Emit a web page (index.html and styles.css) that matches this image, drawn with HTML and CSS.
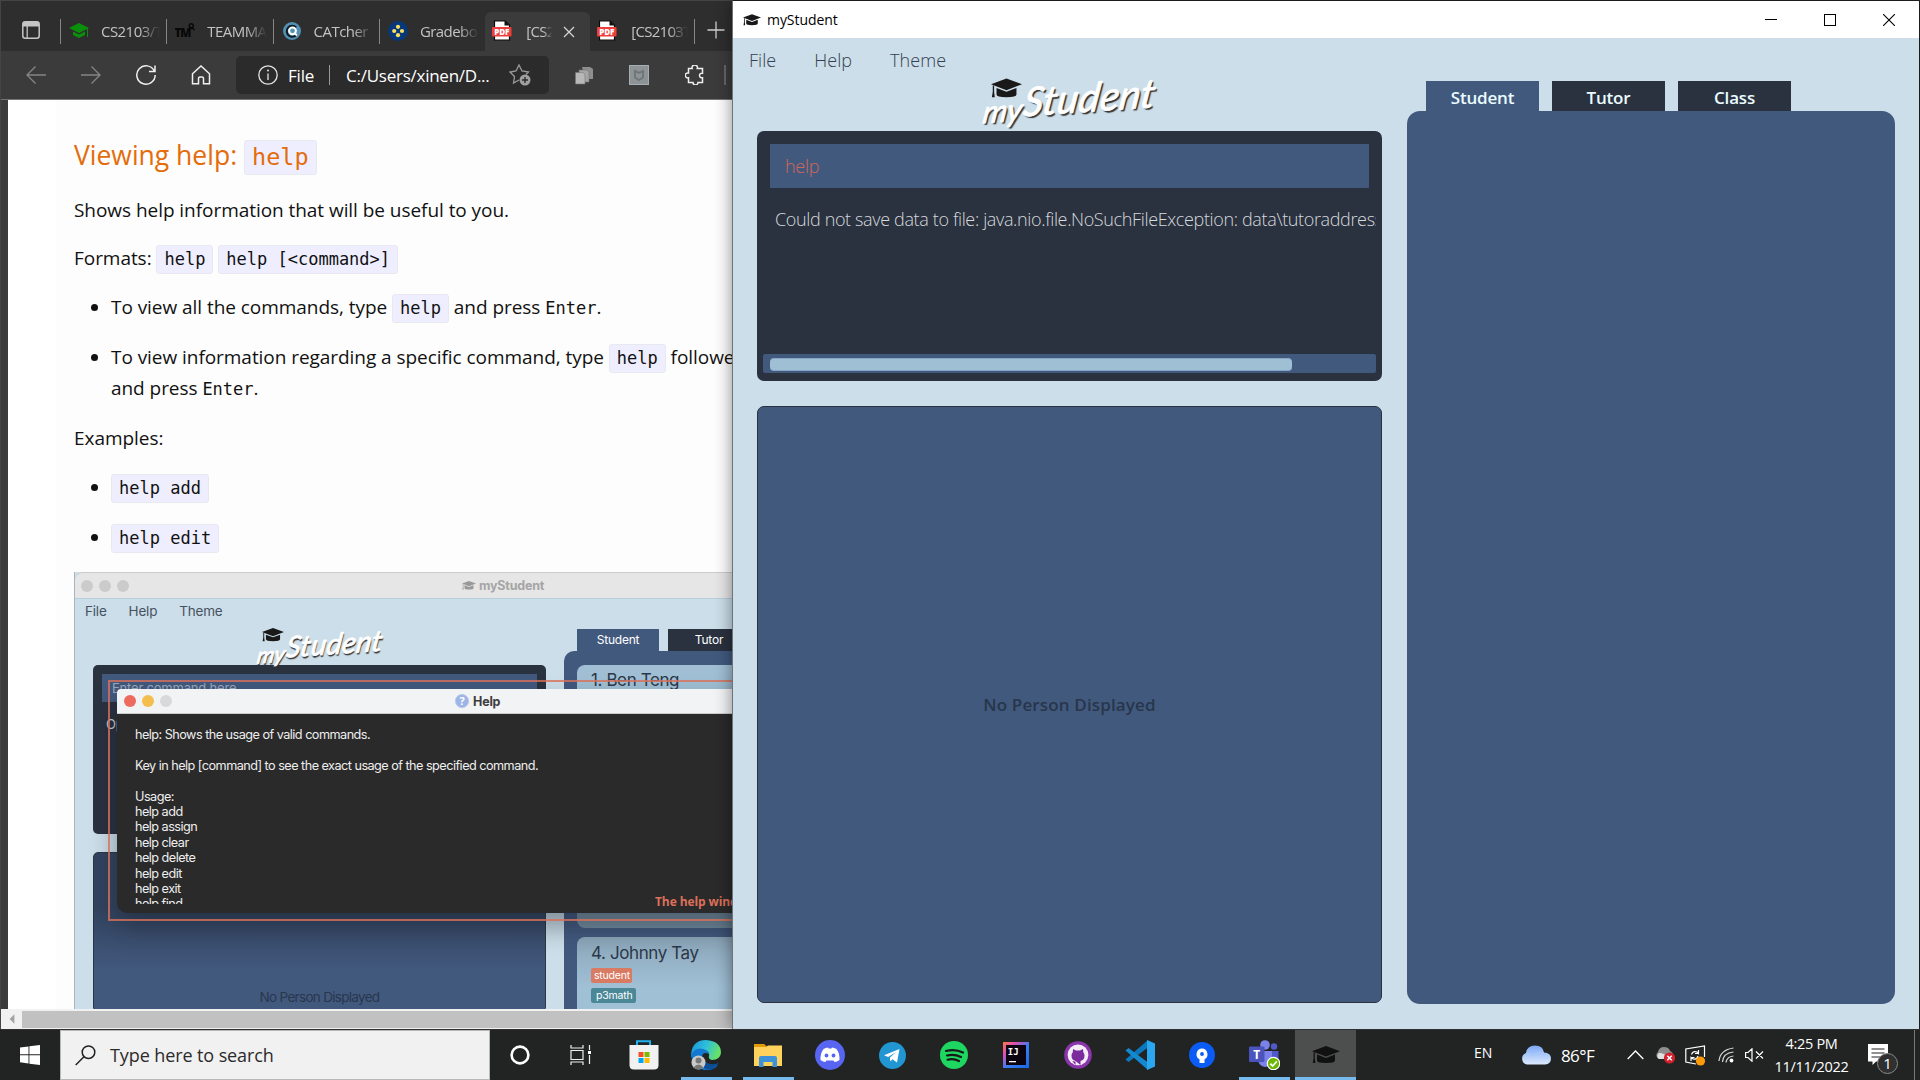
FILE: index.html
```html
<!DOCTYPE html>
<html lang="en">
<head>
<meta charset="utf-8">
<title>Desktop</title>
<link rel="stylesheet" href="styles.css">
</head>
<body>
<svg class="defs" width="0" height="0" aria-hidden="true">
  <symbol id="cap" viewBox="0 0 28 18">
    <path d="M14 0 28 5.2 14 10.6 0 5.2Z"/>
    <path d="M5 8.6 14 12 23 8.6V14.5Q23 17 14 17T5 14.5Z"/>
    <path d="M1.6 6.2h1.2V12L3.4 17H.8L1.6 12Z"/>
  </symbol>
  <symbol id="pdf" viewBox="0 0 20 21">
    <path d="M2.5.8H13L17.5 5V20.2H2.5Z" fill="#fff" stroke="#0b0b0b" stroke-width="1.2"/>
    <path d="M12.5.8 17.5 5.4H12.5Z" fill="#111"/>
    <rect x="0" y="7" width="19.5" height="9.5" rx="1" fill="#ee3f3f"/>
    <text x="9.8" y="14.6" text-anchor="middle" font-size="8" font-weight="800" font-family="Open Sans, sans-serif" fill="#fff">PDF</text>
  </symbol>
</svg>
<div class="desktop">
  <section class="browser">
    <div class="tabs">
      <div class="side-btn"><svg width="18" height="18" viewBox="0 0 18 18"><rect x=".8" y=".8" width="16.4" height="16.4" rx="2.5" fill="none" stroke="#c6c6c6" stroke-width="1.5"/><path d="M1 1h16v4.5H1z" fill="#c6c6c6"/><path d="M5.2 5v12" stroke="#c6c6c6" stroke-width="1.3"/></svg></div>
      <div class="tab"><svg width="20" height="16" viewBox="0 0 20 16" fill="#0a8f0a"><path d="M10 0 20 5 10 10 0 5Z"/><path d="M4 8.4 10 11.4 16 8.4V12L10 15 4 12Z"/><path d="M18 5.5h1V14h-1z"/></svg><span>CS2103/T</span></div>
      <div class="tab"><svg width="20" height="18" viewBox="0 0 20 18"><text x="-.5" y="15" font-size="11.5" font-weight="800" letter-spacing="-1" font-family="Open Sans, sans-serif" fill="#080808">TM</text><circle cx="16.3" cy="3.8" r="2" fill="none" stroke="#080808" stroke-width="1.5"/><path d="M13 8q3.5-3.500 6.500 0" stroke="#080808" stroke-width="1.500" fill="none"/></svg><span>TEAMMATES</span></div>
      <div class="tab"><svg width="18" height="18" viewBox="0 0 18 18"><circle cx="9" cy="9" r="9" fill="#5290b4"/><path d="M13.200 5.400A5.500 5.500 0 1 0 14 12" fill="none" stroke="#101820" stroke-width="2"/><circle cx="9.500" cy="8.800" r="3.400" fill="#5290b4" stroke="#fff" stroke-width="2"/><path d="m11.500 11 2.500 2.500" stroke="#fff" stroke-width="2"/></svg><span>CATcher 3</span></div>
      <div class="tab"><svg width="20" height="20" viewBox="0 0 20 20"><circle cx="10" cy="10" r="9.900" fill="#06387c"/><g fill="#fbe05f"><circle cx="10" cy="5.800" r="2.100"/><circle cx="6.200" cy="10" r="2.100"/><circle cx="14" cy="10" r="2.100"/><circle cx="10" cy="14.200" r="2.100"/></g></svg><span>Gradebook</span></div>
      <div class="tab active"><svg width="20" height="21"><use href="#pdf"/></svg><span>[CS2103</span><svg class="x" width="12" height="12" viewBox="0 0 12 12"><path d="m1 1 10 10M11 1 1 11" stroke="#d4d4d4" stroke-width="1.300"/></svg></div>
      <div class="tab last"><svg width="20" height="21"><use href="#pdf"/></svg><span>[CS2103T</span></div>
      <div class="plus"><svg width="18" height="18" viewBox="0 0 18 18"><path d="M9 .5v17M.5 9h17" stroke="#cfcfcf" stroke-width="1.300"/></svg></div>
    </div>
    <div class="toolbar">
      <svg class="nav" width="20" height="20" viewBox="0 0 20 20"><path d="M20 10H1M9.500 1.500 1 10l8.500 8.500" stroke="#858585"/></svg>
      <svg class="nav" width="20" height="20" viewBox="0 0 20 20"><path d="M0 10h19M10.500 1.500 19 10l-8.500 8.500" stroke="#858585"/></svg>
      <svg class="nav" width="20" height="20" viewBox="0 0 20 20"><path d="M18.300 6A9.200 9.200 0 1 0 19.200 10M19 .5V6.500H13" stroke="#efefef" stroke-width="1.500"/></svg>
      <svg class="nav" width="20" height="20" viewBox="0 0 20 20"><path d="M1.500 8.800 10 1l8.500 7.800V18.800H12.500V13.500q0-1.500-1.500-1.500H9Q7.500 12 7.500 13.500V18.800H1.500Z" stroke="#efefef" stroke-width="1.500"/></svg>
      <div class="address">
        <svg width="20" height="20" viewBox="0 0 20 20"><circle cx="10" cy="10" r="9.200" fill="none" stroke="#e4e4e4" stroke-width="1.300"/><path d="M10 8.500V15" stroke="#e4e4e4" stroke-width="1.300"/><circle cx="10" cy="5.600" r="1" fill="#e4e4e4"/></svg>
        <span class="scheme">File</span><i></i><span class="path">C:/Users/xinen/D...</span>
        <svg class="star" width="23" height="22" viewBox="0 0 23 22"><path d="M10 16 4.500 19 5.500 12.500 1 8l6-1L10 1l3 6 6.500 1-2.500 2.500" fill="none" stroke="#9a9a9a" stroke-width="1.300"/><circle cx="16" cy="16" r="5.500" fill="#9f9f9f"/><path d="M16 13v6M13 16h6" stroke="#2b2b2b" stroke-width="1.400"/></svg>
      </div>
      <svg class="ext e1" width="19" height="19" viewBox="0 0 19 19"><path d="M7 1h8l3 2v10H10z" fill="#8e8e8e"/><path d="M4 4h8l2 2v10H5z" fill="#a6a6a6" stroke="#777" stroke-width=".6"/><path d="M.5 6.500H8L10 9v9H.5z" fill="#b8b8b8" stroke="#777" stroke-width=".6"/></svg>
      <svg class="ext e2" width="20" height="20" viewBox="0 0 20 20"><rect x=".5" y=".5" width="19" height="19" fill="#8e9396" stroke="#a4adb3"/><path d="M6 6 10 8l4-2v6.500L10 15l-4-2.500Z" fill="none" stroke="#70777b" stroke-width="2"/></svg>
      <svg class="ext e3" width="20" height="20" viewBox="0 0 20 20"><path d="M3.500 3.500H7.200A2.700 2.700 0 1 1 12.300 3.500H17.500V8.300A2.300 2.300 0 1 0 17.500 12.700V17.500H13A2.400 2.400 0 1 1 8 17.500H3.500V12.800A2.500 2.500 0 1 1 3.500 8Z" fill="none" stroke="#eee" stroke-width="1.500"/></svg>
      <b></b>
    </div>
    <div class="viewport">
      <article>
        <h2>Viewing help: <code>help</code></h2>
        <p class="shows">Shows help information that will be useful to you.</p>
        <p>Formats: <code>help</code> <code>help [&lt;command&gt;]</code></p>
        <ul>
          <li>To view all the commands, type <code>help</code> and press <kbd>Enter</kbd>.</li>
          <li>To view information regarding a specific command, type <code>help</code> followed<br>and press <kbd>Enter</kbd>.</li>
        </ul>
        <p>Examples:</p>
        <ul>
          <li><code>help add</code></li>
          <li><code>help edit</code></li>
        </ul>
        <figure class="shot">
          <header><i></i><i></i><i></i><span class="shot-title"><svg width="14" height="11"><use href="#cap"/></svg>myStudent</span></header>
          <nav><span>File</span><span>Help</span><span>Theme</span></nav>
          <div class="shot-body">
            <div class="shot-left">
              <div class="logo small"><svg width="22" height="18"><use href="#cap"/></svg><span><small>my</small>Student</span></div>
              <div class="shot-cmd"><div>Enter command here...</div><p>Op</p></div>
              <div class="shot-none">No Person Displayed</div>
            </div>
            <div class="shot-right">
              <div class="shot-tabs"><span>Student</span><span>Tutor</span></div>
              <div class="shot-list">
                <div class="card one"><h4>1. Ben Teng</h4></div>
                <div class="card"><h4>4. Johnny Tay</h4><span class="tag">student</span><span class="tag teal">p3math</span></div>
              </div>
            </div>
          </div>
          <div class="help-win">
            <header><i></i><i></i><i></i><span><svg width="14" height="14" viewBox="0 0 14 14"><circle cx="7" cy="7" r="6.600" fill="#9db5e6" stroke="#b9c9ec"/><text x="7" y="11" font-size="11" font-weight="700" fill="#fff" text-anchor="middle" font-family="Open Sans, sans-serif">?</text></svg>Help</span></header>
            <pre>help: Shows the usage of valid commands.

Key in help [command] to see the exact usage of the specified command.

Usage:
help add
help assign
help clear
help delete
help edit
help exit
help find</pre>
            <em>The help window</em>
          </div>
          <div class="red-frame"></div>
        </figure>
      </article>
    </div>
    <div class="hscroll"><svg width="22" height="20" viewBox="0 0 22 20"><path d="M14 5v10l-5-5z" fill="#a3a3a3"/></svg><i></i></div>
  </section>

  <section class="app">
    <header class="titlebar">
      <svg width="18" height="12"><use href="#cap"/></svg><span>myStudent</span>
      <div class="controls"><svg width="12" height="12"><path d="M0 5.500h12" stroke="#000"/></svg><svg width="12" height="12"><rect x=".5" y=".5" width="11" height="11" fill="none" stroke="#000"/></svg><svg width="12" height="12"><path d="m0 0 12 12M12 0 0 12" stroke="#000" stroke-width="1.100"/></svg></div>
    </header>
    <nav class="menu"><span>File</span><span>Help</span><span>Theme</span></nav>
    <div class="content">
      <div class="left">
        <div class="logo"><svg width="31" height="25"><use href="#cap"/></svg><span><small>my</small>Student</span></div>
        <div class="command"><div class="input">help</div><p>Could not save data to file: java.nio.file.NoSuchFileException: data\tutoraddressbook.json</p><div class="track"><i></i></div></div>
        <div class="person">No Person Displayed</div>
      </div>
      <div class="right">
        <div class="apptabs"><span class="on">Student</span><span>Tutor</span><span>Class</span></div>
        <div class="panel"></div>
      </div>
    </div>
  </section>

  <footer class="taskbar">
    <div class="start"><svg width="20" height="20" viewBox="0 0 20 20" fill="#fff"><path d="M0 2.600 8.500 1.400V9.300H0ZM9.400 1.200 20 0V9.300H9.400ZM0 10.200H8.500V18.500L0 17.300ZM9.400 10.200H20V20L9.400 18.700Z"/></svg></div>
    <div class="search"><svg width="21" height="21" viewBox="0 0 21 21"><circle cx="13.500" cy="7.200" r="6.300" fill="none" stroke="#222" stroke-width="1.500"/><path d="M9 11.800.7 20" stroke="#222" stroke-width="1.500"/></svg><span>Type here to search</span></div>
    <div class="icons">
      <div class="first"><svg width="20" height="20" viewBox="0 0 20 20"><circle cx="10" cy="10" r="8.400" fill="none" stroke="#fff" stroke-width="2.600"/></svg></div>
      <div class="view"><svg width="21" height="20" viewBox="0 0 21 20" fill="none" stroke="#eee" stroke-width="1.200"><path d="M1 0v3h12V0M1 20v-3h12v3M1 5.500h12v9H1ZM19.500 0v5M19.500 10v9"/><path d="M18 6h3v3h-3z" fill="#fff" stroke="none"/></svg></div>
      <div><svg width="30" height="30" viewBox="0 0 30 30"><path d="M8 6V1.200H21V6" fill="none" stroke="#20b0ee" stroke-width="2"/><path d="M.5 5h29v20q0 4.500-4.500 4.500H5Q.5 29.500.5 25Z" fill="#f1f1f1"/><path d="M9.500 12h5v5h-5z" fill="#f25022"/><path d="M15.500 12h5v5h-5z" fill="#7fba00"/><path d="M9.500 18h5v5h-5z" fill="#00a4ef"/><path d="M15.500 18h5v5h-5z" fill="#ffb900"/></svg></div>
      <div class="open"><svg width="30" height="30" viewBox="0 0 30 30"><defs><linearGradient id="eg" x2="1" y2=".3"><stop stop-color="#1993d8"/><stop offset=".55" stop-color="#2ec0dc"/><stop offset="1" stop-color="#66e06a"/></linearGradient></defs><path d="M0 17Q0 0 15 0 30 1 30 13 29 20 21 20 17 19 18 16 19 12 14 10 6 8 0 17Z" fill="url(#eg)"/><path d="M0 15Q4 7 12 9 18 11 18 14 11 11 11 18 13 27 22 27L27 25Q22 31 13 30 1 27 0 15Z" fill="#1278d0"/><path d="M12 16Q12 23 20 24 25 25 28 22 23 32 14 29 9 23 12 16Z" fill="#0c4f99"/><circle cx="7.500" cy="22.500" r="7" fill="#c9c9c9"/><circle cx="7.500" cy="20.500" r="3" fill="#777"/><path d="M2.500 27.500q5-6 10 0-5 4-10 0Z" fill="#777"/></svg></div>
      <div class="open"><svg width="28" height="24" viewBox="0 0 28 24"><path d="M0 1h10l3 2.500V8H0Z" fill="#e29a06"/><path d="M0 4h12l2-1.500H28V23H0Z" fill="#ffd25d"/><path d="M5 24V15q0-2 2-2H21q2 0 2 2v9h-4.500V19H9.500v5Z" fill="#3c91d8"/></svg></div>
      <div><svg width="30" height="30" viewBox="0 0 30 30"><circle cx="15" cy="15" r="15" fill="#5865f2"/><path d="M8.500 9Q11 7.500 13 7.500L13.500 8.500H16.500L17 7.500Q19 7.500 21.500 9 25 14 24.500 20 22 22 19.500 22L18.500 20.500H11.500L10.500 22Q8 22 5.500 20 5 14 8.500 9Z" fill="#fff"/><ellipse cx="11.500" cy="15.500" rx="1.900" ry="2.100" fill="#5865f2"/><ellipse cx="18.500" cy="15.500" rx="1.900" ry="2.100" fill="#5865f2"/></svg></div>
      <div><svg width="27" height="27" viewBox="0 0 27 27"><circle cx="13.500" cy="13.500" r="13.500" fill="#2196d3"/><path d="M5 13.300 20.500 7 18 20.500 13.500 17.300 11.500 19.500 10.800 15.700 17 10 9.200 15Z" fill="#fff"/></svg></div>
      <div><svg width="28" height="28" viewBox="0 0 28 28"><circle cx="14" cy="14" r="14" fill="#1ed760"/><path d="M6 10q9-2.500 17 1.500M7 14.500q7-2 14 1.500M7.500 18.700q6-1.700 11.500 1.300" fill="none" stroke="#181818" stroke-width="2.200" stroke-linecap="round"/></svg></div>
      <div><svg width="26" height="26" viewBox="0 0 26 26"><defs><linearGradient id="ig" x2="1" y2="1"><stop stop-color="#ff7a40"/><stop offset=".25" stop-color="#e14fb2"/><stop offset=".55" stop-color="#3a7cf5"/><stop offset="1" stop-color="#1667e8"/></linearGradient></defs><path d="M0 0h26v26H0z" fill="url(#ig)"/><path d="M3 3h20v20H3z" fill="#0b0310"/><text x="4.800" y="13" font-family="DejaVu Sans Mono, monospace" font-weight="700" font-size="9" fill="#fff">IJ</text><path d="M6 19h7v1.300H6z" fill="#fff"/></svg></div>
      <div><svg width="28" height="28" viewBox="0 0 28 28"><circle cx="14" cy="14" r="13.800" fill="#8b35ac"/><circle cx="14" cy="13.800" r="10.400" fill="#f4edf8"/><path d="M11.500 24V20.500Q8 21 7 18.500M11.500 20Q7.500 19 7.500 14.500 7.500 12.500 8.800 11.200L9 8 12 9.500h4L19 8 19.300 11.200Q20.500 12.500 20.500 14.500 20.500 19 16.500 20V24Z" fill="#7b2b9c"/></svg></div>
      <div><svg width="30" height="30" viewBox="0 0 30 30"><path d="m.5 19.500 3 2.500L23 7.500V0Z" fill="#0b78be"/><path d="M.5 10.500 3.500 8 23 22.500V30Z" fill="#1489d0"/><path d="M22 0 30 3.500V26.500L22 30Z" fill="#2aa7ef"/></svg></div>
      <div><svg width="26" height="26" viewBox="0 0 26 26"><circle cx="13" cy="13" r="13" fill="#0a5cf5"/><path d="M13 6.500A5.700 5.700 0 0 0 10.500 17.200V21H15.500V17.200A5.700 5.700 0 0 0 13 6.500Z" fill="#fff"/><circle cx="13" cy="12" r="1.900" fill="#0a5cf5"/></svg></div>
      <div class="open"><svg width="31" height="30" viewBox="0 0 31 30"><circle cx="16" cy="5" r="4.800" fill="#7b83eb"/><circle cx="25" cy="6.500" r="3.200" fill="#5059c9"/><path d="M19 11H29.500V20Q29 24 24 24H19Z" fill="#5059c9"/><path d="M9 11H23V20Q22 27 16 27 10 26 9 20Z" fill="#7b83eb"/><rect y="6.500" width="15.500" height="15.500" rx="1" fill="#4b53bc"/><text x="7.700" y="18.500" text-anchor="middle" font-size="12" font-weight="700" fill="#fff" font-family="Open Sans, sans-serif">T</text><circle cx="24.500" cy="23.500" r="6.200" fill="#6bb700" stroke="#fff" stroke-width="1.200"/><path d="m21.300 23.600 2.300 2.400 4.200-4.600" fill="none" stroke="#fff" stroke-width="1.800"/></svg></div>
      <div class="open current"><svg width="28" height="18" fill="#111"><use href="#cap"/></svg></div>
    </div>
    <div class="tray">
      <span class="lang">EN</span>
      <svg class="cloud" width="30" height="20" viewBox="0 0 30 20"><defs><linearGradient id="cg" y2="1" x2="0"><stop stop-color="#7ca9f4"/><stop offset="1" stop-color="#dce9fd"/></linearGradient></defs><path d="M6 19.500A6 6 0 0 1 5 8Q6 .5 14 .5T23 7.500Q30 8 30 13.500T24 19.500Z" fill="url(#cg)"/><path d="M5 8q4 0 6 3 5-5 12-3.500" fill="none" stroke="#a9c8fa"/></svg>
      <span class="temp">86°F</span>
      <svg class="chev" width="17" height="10" viewBox="0 0 17 10"><path d="m.7 9 7.800-8 7.800 8" fill="none" stroke="#fff" stroke-width="1.300"/></svg>
      <svg class="od" width="21" height="18" viewBox="0 0 21 18"><path d="M4 13A4 4 0 0 1 3 6Q4 1 9 1t6 4q4 1 3 8Z" fill="#8e8e8e"/><path d="M4 13A3.500 3.500 0 0 1 4 7q5-1 10 6Z" fill="#e0e0e0"/><circle cx="14.500" cy="12" r="5.600" fill="#d3222e"/><path d="m12.300 9.800 4.400 4.400m0-4.400-4.400 4.400" stroke="#fff" stroke-width="1.500"/></svg>
      <svg class="upd" width="21" height="21" viewBox="0 0 21 21" fill="none" stroke="#fff" stroke-width="1.200"><path d="M11 19 .8 17V4L19.500 1V12M6.500 9.500Q8 5.500 12 7l1.500 1.500V5M13.500 8.500H10M13 11Q12 15 8 14L6 12.500V16M6 12.500h3.500"/><circle cx="15.500" cy="16" r="4.600" fill="#ff9a0a" stroke="none"/></svg>
      <svg class="wifi" width="17" height="16" viewBox="0 0 17 16" fill="none" stroke="#d8d8d8" stroke-width="1.200"><path d="M1 14Q2 3 15.500 1M4.500 15Q5 6 15.500 5M8 15.500Q9 9.500 15.500 9"/><circle cx="13.500" cy="13.500" r="1.900" fill="#fff" stroke="none"/></svg>
      <svg class="vol" width="19" height="14" viewBox="0 0 19 14" fill="none" stroke="#fff" stroke-width="1.200"><path d="M.6 4.500H3L7 .8V13.200L3 9.500H.6ZM11 3.500l7 7m0-7-7 7"/></svg>
      <div class="clock"><span>4:25 PM</span><span>11/11/2022</span></div>
      <svg class="note" width="31" height="31" viewBox="0 0 31 31"><path d="M0 0h20v17.500H8L4.500 21v-3.500H0Z" fill="#fff"/><path d="M3.500 5H16.500M3.500 9H16.500M3.500 13H12" stroke="#222" stroke-width="1.200"/><circle cx="19.500" cy="19.500" r="10" fill="#303030" stroke="#888"/><text x="19.500" y="25" text-anchor="middle" font-size="15" font-family="Open Sans, sans-serif" fill="#fff">1</text></svg>
    </div>
  </footer>
</div>
</body>
</html>
```
FILE: styles.css
```css
* { box-sizing: border-box; }
body { margin: 0; font-family: "Open Sans", "Noto Sans", sans-serif; overflow: hidden; }
svg { display: block; flex: none; }
.defs { position: absolute; }
p, h2, h4, ul, figure, pre { margin: 0; padding: 0; }
.desktop { position: relative; width: 1920px; height: 1080px; overflow: hidden; background: #232323; }

/* browser window */
.browser { position: absolute; left: 0; top: 0; width: 733px; height: 1029px; display: flex; flex-direction: column; background: #3b3b3b; border-left: 1px solid #444; }
.tabs { height: 51px; display: flex; align-items: flex-end; background: #2e2e2e; border-top: 1px solid #444; color: #c3c3c3; font-size: 15px; }
.side-btn { width: 59px; height: 39px; padding: 9px 0 0 21px; }
.tab { position: relative; width: 106.300px; flex: none; height: 39px; display: flex; align-items: center; padding: 0 5px 2px 9px; overflow: hidden; }
.tab::before { content: ""; position: absolute; left: 0; top: 7px; width: 1px; height: 25px; background: #858585; }
.tab > svg { width: 20px; }
.tab span { margin-left: 12px; flex: 1; overflow: hidden; white-space: nowrap; letter-spacing: -.55px; mask-image: linear-gradient(90deg, #000 65%, transparent 98%); }
.tab.active { width: 105px; padding-left: 7px; background: #3b3b3b; border-radius: 6px 6px 0 0; }
.tab.active::before, .tab.last::before { display: none; }
.tab.last { width: 104px; padding-left: 7px; }
.tab.active span, .tab.last span { margin-left: 14px; letter-spacing: -.7px; }
.tab .x { width: 12px; margin: 2px 10px 0 10px; }
.plus { height: 39px; padding: 9px 0 0 13px; position: relative; }
.plus::before { content: ""; position: absolute; left: 0; top: 7px; width: 1px; height: 25px; background: #858585; }
.toolbar { height: 49px; display: flex; align-items: center; border-bottom: 1px solid #747474; padding-left: 25px; }
.nav { margin-right: 35px; fill: none; stroke-width: 1.300; }
.address { width: 313px; height: 38px; margin-left: -10px; display: flex; align-items: center; padding-left: 22px; background: #2b2b2b; border-radius: 5px; color: #fff; font-size: 17px; }
.scheme { width: 40px; margin-left: 10px; letter-spacing: -.2px; margin-right: 1px; }
.address i { width: 1px; height: 20px; background: #999; }
.path { width: 145px; margin-left: 16px; letter-spacing: -.25px; white-space: nowrap; }
.star { margin-left: 18px; }
.e1 { margin-left: 26px; }
.e2 { margin-left: 35px; }
.e3 { margin-left: 36px; }
.toolbar b { width: 2px; height: 20px; margin-left: 19px; background: #666; }
.viewport { height: 909px; margin-left: 7px; padding-left: 48px; background: #fff; overflow: hidden; }
article { height: 909px; padding: 35px 0 0 18px; background: #fdfdfd; color: #111; font-size: 19px; line-height: 31px; letter-spacing: -.05px; white-space: nowrap; }
h2 { height: 40px; margin-bottom: 20px; line-height: 40px; font-weight: 400; font-size: 26.500px; letter-spacing: 0; color: #e46c0a; }
article p { height: 31px; margin-bottom: 18px; }
article .shows { margin-bottom: 17px; }
article ul { padding-left: 37px; }
article li { margin-bottom: 19px; }
code { display: inline-block; padding: 3px 7px 4px; border: 1px solid #e8e8f0; border-radius: 3px; background: #eef; font: 17px/20px "DejaVu Sans Mono", monospace; letter-spacing: 0; vertical-align: baseline; margin: -8px 0; }
h2 code { font-size: 23.500px; line-height: 26px; }
kbd { font: 17px/1 "DejaVu Sans Mono", monospace; letter-spacing: 0; }
.hscroll { height: 20px; display: flex; background: #f1f1f1; }
.hscroll i { flex: 1; margin: 2px 0 1px; background: #c1c1c1; }
.hscroll svg { width: 21px; }

/* documentation picture of the application */
.shot { position: relative; width: 1000px; height: 440px; display: flex; flex-direction: column; background: #ccdee9; border-left: 1px solid #aab4bd; letter-spacing: -.2px; }
.shot > header { flex: none; height: 27px; display: flex; align-items: center; padding-left: 6px; background: #e6e6e6; border-top: 1px solid #ccc; border-bottom: 1px solid #b8cfdd; border-radius: 8px 0 0 0; }
.shot header i { width: 12px; height: 12px; margin-right: 6px; border-radius: 50%; background: #cbcbcb; }
.shot-title { display: flex; align-items: center; gap: 3px; margin-left: 327px; font: 700 12.500px Inter, sans-serif; color: #a5a5a5; fill: #999; }
.shot nav { flex: none; height: 27px; display: flex; gap: 22px; padding-left: 10px; font: 13.500px/25px Inter, sans-serif; color: #46525f; }
.shot-body { display: flex; flex: none; height: 386px; }
.shot-left { width: 453px; margin-left: 18px; display: flex; flex-direction: column; }
.shot-cmd { flex: none; height: 169px; padding: 9px; border-radius: 5px; background: #2a313f; color: #ccc; font: 13px Inter, sans-serif; }
.shot-cmd div { height: 28px; padding: 6px 10px; background: #42597e; color: #9ba8bb; }
.shot-cmd p { margin: 14px 0 0 4px; }
.shot-none { margin-top: 18px; flex: 1; border: 1px solid #2a3545; border-radius: 5px; background: linear-gradient(#32435f 35%, #42597e 75%); padding-top: 136px; text-align: center; color: #28374d; font: 13.500px Inter, sans-serif; letter-spacing: -.7px; }
.shot-right { margin-left: 18px; width: 480px; display: flex; flex-direction: column; }
.shot-tabs { flex: none; height: 25px; padding: 3px 0 0 13px; display: flex; gap: 9px; }
.shot-tabs span { width: 82px; height: 22px; background: #42597e; color: #fff; text-align: center; font: 12px/22px Inter, sans-serif; }
.shot-tabs span + span { background: #2a313f; }
.shot-list { flex: 1; padding: 14px 0 0 13px; border-radius: 10px 0 0 0; background: #42597e; }
.card { height: 110px; padding: 11px 14px; border-radius: 8px; background: linear-gradient(#8ba5b8, #a0c0d6 45%); }
.card.one { height: 263px; margin-bottom: 9px; padding-top: 2px; background: linear-gradient(#a0bfd4 40%, #718c9e); }
.card h4 { font: 17px/26px Inter, sans-serif; height: 26px; color: #2b3848; letter-spacing: -.4px; }
.card:not(.one) h4 { margin: -9px 0 1px; height: 28px; line-height: 28px; }
.tag { display: block; width: 41px; height: 15px; margin-bottom: 5px; border-radius: 2px; background: #d97a63; color: #fff; font: 10.500px/15px Inter, sans-serif; padding-left: 3px; }
.tag.teal { width: 45px; background: #4a8797; padding-left: 5px; }
.red-frame { position: absolute; left: 33px; top: 108px; width: 900px; height: 241px; border: 2px solid rgba(217, 112, 90, .8); }
.help-win { position: absolute; left: 42px; top: 117px; width: 900px; height: 224px; display: flex; flex-direction: column; background: #2a2a2a; border-radius: 4px 0 0 10px; color: #eee; box-shadow: 0 14px 26px rgba(20, 25, 35, .4); }
.help-win header { flex: none; height: 25px; display: flex; align-items: center; padding-left: 7px; background: #f2f3f5; border-radius: 4px 0 0 0; border-bottom: 1px solid #ccc; }
.help-win header i:nth-child(1) { background: #ec6a5e; }
.help-win header i:nth-child(2) { background: #f4be4f; }
.help-win header i:nth-child(3) { background: #d8d9da; }
.help-win header span { display: flex; align-items: center; gap: 4px; margin-left: 277px; color: #3d3d3d; font: 700 12.500px Inter, sans-serif; }
.help-win pre { height: 177px; margin: 13px 0 -12px 18px; overflow: hidden; font: 12.700px/15.400px Inter, sans-serif; letter-spacing: -.54px; }
.help-win em { margin-left: 538px; color: #dd705a; font: 700 12px/20px "Open Sans", sans-serif; letter-spacing: -.1px; }

/* myStudent window */
.app { position: absolute; left: 732px; top: 1px; width: 1187px; height: 1028px; display: flex; flex-direction: column; background: #ccdee9; border-left: 1px solid #6d7378; box-shadow: 0 0 16px rgba(0, 0, 0, .45); }
.titlebar { height: 37px; display: flex; align-items: center; padding: 0 24px 0 10px; background: #fff; color: #000; font-size: 14px; fill: #191919; }
.titlebar span { margin: -1px 0 0 6px; letter-spacing: -.05px; }
.controls { display: flex; gap: 47px; margin-left: auto; fill: none; }
.menu { height: 43px; display: flex; gap: 38px; padding-left: 16px; line-height: 44px; font-size: 18px; font-weight: 300; color: #34404f; letter-spacing: .05px; }
.content { height: 948px; display: flex; }
.left { width: 625px; margin-left: 24px; display: flex; flex-direction: column; }
.logo { position: relative; height: 50px; fill: #191919; color: #fff; }
.logo svg { position: absolute; left: 234px; top: -5px; }
.logo span { position: absolute; left: 227px; top: -7px; font: italic 400 40px/48px "Lato", sans-serif; letter-spacing: .3px; -webkit-text-stroke: .8px #fff; text-shadow: 2px 2px 1px #333; transform: rotate(-4deg) skewX(-12deg); white-space: nowrap; }
.logo small { font-size: 31px; position: relative; top: 4px; }
.logo.small { height: 39px; flex: none; }
.logo.small svg { left: 169px; top: 0; }
.logo.small span { left: 165px; top: 1px; font-size: 29px; line-height: 34px; text-shadow: 1px 2px 1px #333; }
.logo.small small { font-size: 22px; }
.command { height: 250px; display: flex; flex-direction: column; padding: 13px 6px 8px; border-radius: 7px; background: #2a313f; }
.input { height: 44px; margin: 0 7px; padding-left: 15px; line-height: 45px; background: #42597e; color: #d0665a; font-size: 18px; font-weight: 300; letter-spacing: -.3px; }
.command p { margin: 14px 0 0 12px; overflow: hidden; white-space: nowrap; line-height: 34px; color: #d6d9dd; font-size: 18px; font-weight: 300; letter-spacing: -.36px; }
.track { height: 19px; margin-top: auto; padding: 4px 7px 2px; background: #42597e; border-radius: 2px; }
.track i { display: block; width: 522px; height: 13px; border-radius: 4px; background: #9fbfd5; border: 1px solid #86a6c3; border-width: 1px 0; }
.person { height: 597px; margin-top: 25px; border: 1px solid #2a313f; border-radius: 7px; background: #42597e; color: #27364b; font-weight: 600; font-size: 17px; line-height: 595px; text-align: center; letter-spacing: .15px; }
.right { width: 488px; margin-left: 25px; display: flex; flex-direction: column; }
.apptabs { height: 30px; display: flex; gap: 13px; padding-left: 19px; }
.apptabs span { width: 113px; height: 30px; background: #2a313f; color: #eafcff; text-align: center; font-size: 17px; line-height: 33px; font-weight: 600; letter-spacing: -.2px; }
.apptabs .on { background: #42597e; }
.panel { height: 893px; border-radius: 13px; background: #42597e; }

/* taskbar */
.taskbar { position: absolute; left: 0; bottom: 0; width: 1920px; height: 51px; display: flex; background: #222423; color: #fff; border-top: 1px solid #303030; }
.start { width: 60px; display: flex; align-items: center; justify-content: center; }
.search { width: 430px; display: flex; align-items: center; padding-left: 14px; background: #f1f1f1; border: 1px solid #b8b8b8; color: #2b2b2b; font-size: 18px; }
.search span { margin-left: 14px; letter-spacing: -.1px; }
.icons { display: flex; }
.icons > div { position: relative; width: 62px; display: flex; align-items: center; justify-content: center; }
.icons > .first { width: 60px; }
.icons > .view { width: 61px; margin-right: 2px; }
.icons > .open::after { content: ""; position: absolute; left: 6px; right: 5px; bottom: 0; height: 3px; background: #76b9ed; }
.icons > .current { width: 61px; background: #4d4e4e; }
.icons > .current::after { left: 0; right: 0; }
.tray { flex: 1; display: flex; align-items: center; margin-right: 5px; border-right: 1px solid #777; }
.lang { width: 47px; margin-left: 118px; font-size: 14px; line-height: 20px; margin-top: -4px; }
.temp { width: 66px; margin-left: 10px; font-size: 17px; letter-spacing: -.6px; }
.od { margin-left: 11px; }
.upd { margin-left: 9px; }
.wifi { margin-left: 12px; }
.vol { margin-left: 10px; }
.clock { display: flex; flex-direction: column; width: 95px; text-align: center; font-size: 14.500px; line-height: 23px; letter-spacing: -.3px; }
.note { margin: 9px 0 0 9px; }
```
